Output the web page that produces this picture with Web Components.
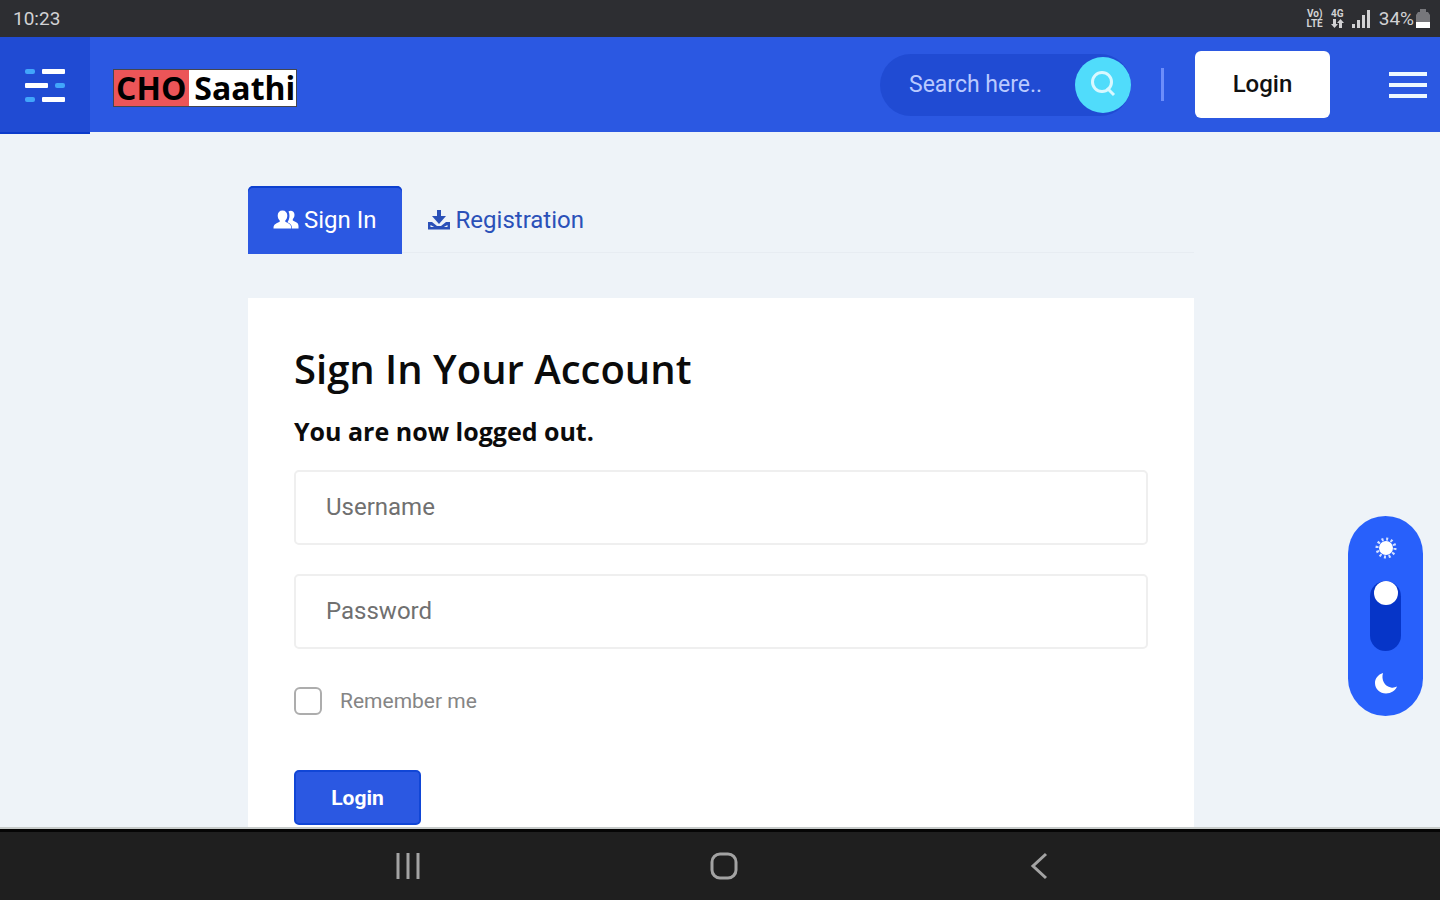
<!DOCTYPE html>
<html lang="en">
<head>
<meta charset="utf-8">
<meta name="viewport" content="width=device-width, initial-scale=1">
<title>CHO Saathi - Sign In</title>
<style>
  html, body {
    height: 100%;
    margin: 0;
  }
  body {
    font-family: Roboto, "Liberation Sans", sans-serif;
    --primary: #2b58e2;
    --primary-dark: #204bd3;
    --page: #eef3f8;
  }
</style>
</head>
<body>
<app-screen>
  <status-bar slot="top" time="10:23" battery="34%"></status-bar>
  <site-header slot="top"></site-header>
  <tab-bar>
    <tab-link href="#signin" active>
      <svg slot="icon" width="26" height="20" viewBox="0 0 26 20" fill="currentColor">
        <path d="M15.500 1.500c2-1.700 6-.6 6 3.200 0 2-.7 3.400-1.700 4.400v1.400c2.500 1.300 5.700 2 5.700 5.500v2.500h-6.500c0-4-2-5-4.500-6.300 2-2.700 2.700-7.500 1-10.700z"/>
        <path d="M9.500.5c3 0 4.800 2 4.800 5 0 2.200-.8 3.900-2 5v1.300c2.700 1.400 6 2.200 6 6.200v.5H.5V18c0-4 3.500-4.800 6.200-6.200v-1.300c-1.200-1.100-2-2.800-2-5 0-3 1.800-5 4.800-5z"/>
      </svg>
      Sign In
    </tab-link>
    <tab-link href="#registration">
      <svg slot="icon" width="24" height="20" viewBox="0 0 24 20" fill="currentColor">
        <path d="M10 0h4v6h5l-7 8-7-8h5z"/>
        <path d="M1 12h4l5 4h4l5-4h4v7.500H1zm2.500 3v2h17v-2L15 18H9z"/>
      </svg>
      Registration
    </tab-link>
  </tab-bar>
  <signin-card>
    <span slot="title">Sign In Your Account</span>
    <span slot="message">You are now logged out.</span>
    <text-field label="Username" type="text"></text-field>
    <text-field label="Password" type="password"></text-field>
    <check-field>Remember me</check-field>
    <submit-button>Login</submit-button>
  </signin-card>
  <theme-switch slot="float"></theme-switch>
  <nav-buttons slot="bottom"></nav-buttons>
</app-screen>

<script>
(function(w, doc) {
  'use strict';

  // every element here gets an open root with its own template
  function define(name, html, setup) {
    const template = doc.createElement('template');
    template.innerHTML = html;

    w.customElements.define(name, class extends HTMLElement {
      constructor() {
        super();
        this.attachShadow({ mode: 'open' });
        this.shadowRoot.appendChild(template.content.cloneNode(true));
      }

      connectedCallback() {
        if (setup) setup(this, this.shadowRoot);
      }
    });
  }

  define('app-screen', `
    <style>
      :host{
        display:flex;
        flex-direction:column;
        height:100vh;
        background:var(--page);
      }
      main{
        flex:1;
        min-height:0;
        overflow:hidden;
        padding:54px 24px 0 26px;
      }
      .content{
        max-width:946px;
        margin:0 auto;
      }
    </style>
    <slot name="top"></slot>
    <main><div class="content"><slot></slot></div></main>
    <slot name="float"></slot>
    <slot name="bottom"></slot>
  `);

  define('status-bar', `
    <style>
      :host{
        display:flex;
        align-items:center;
        justify-content:space-between;
        height:37px;
        padding:0 10px 0 13px;
        box-sizing:border-box;
        background:#2d2e32;
        color:#d2d2d4;
        font-size:19px;
      }
      .right{
        display:flex;
        align-items:center;
        gap:8px;
      }
      .badge{
        display:flex;
        flex-direction:column;
        align-items:center;
        font-size:10px;
        line-height:10px;
        font-weight:700;
      }
      .level{
        display:flex;
        align-items:center;
        gap:2px;
      }
      svg{
        display:block;
      }
    </style>
    <span class="time"></span>
    <div class="right">
      <div class="badge"><span>Vo)</span><span>LTE</span></div>
      <div class="badge">
        <span>4G</span>
        <svg width="13" height="9" viewBox="0 0 13 9" fill="currentColor">
          <path d="M2 0h3v5h2L3.500 9 0 5h2zM8 9h3V4h2L9.500 0 6 4h2z"/>
        </svg>
      </div>
      <svg width="19" height="19" viewBox="0 0 19 19" fill="currentColor">
        <path d="M0 15h3v4H0zM5 11h3v8H5zM10 6h3v13h-3zM15 1h3v18h-3z"/>
      </svg>
      <div class="level">
        <span class="battery"></span>
        <svg width="14" height="20" viewBox="0 0 14 20">
          <path d="M4 0h6v3h2l2 3v8H0V6l2-3h2z" fill="#77777b"/>
          <path d="M0 13h14v6H0z" fill="#fff"/>
        </svg>
      </div>
    </div>
  `, (el, root) => {
    root.querySelector('.time').textContent = el.getAttribute('time');
    root.querySelector('.battery').textContent = el.getAttribute('battery');
  });

  define('site-header', `
    <style>
      :host{
        display:block;
        background:var(--primary);
      }
      header{
        display:flex;
        align-items:center;
        height:95px;
        padding-right:13px;
      }
      button{
        border:none;
        padding:0;
        background:none;
        cursor:pointer;
        font:inherit;
      }
      .category{
        display:flex;
        align-items:center;
        justify-content:center;
        align-self:flex-start;
        flex:none;
        width:90px;
        height:97px;
        background:var(--primary-dark);
        border-bottom:2px solid #0b3bcb;
        box-sizing:border-box;
      }
      .login{
        width:135px;
        height:67px;
        margin:0 59px 0 31px;
        padding-bottom:2px;
        border-radius:6px;
        background:#fff;
        color:#111;
        font-size:24px;
        font-weight:500;
      }
      .divider{
        width:3px;
        height:33px;
        margin-left:30px;
        background:#6c8dfa;
      }
      site-logo{
        margin:6px auto 0 23px;
      }
      svg{
        display:block;
      }
    </style>
    <header>
      <button class="category" aria-label="Categories">
        <svg width="40" height="36" viewBox="0 0 40 36">
          <g fill="#fff">
            <rect x="17" y="2" width="23" height="5" rx="1"/>
            <rect x="0" y="16" width="23" height="5" rx="1"/>
            <rect x="17" y="30" width="23" height="5" rx="1"/>
          </g>
          <g fill="#41a5fb">
            <rect x="0" y="2" width="10" height="5" rx="2"/>
            <rect x="30" y="16" width="10" height="5" rx="2"/>
            <rect x="0" y="30" width="10" height="5" rx="2"/>
          </g>
        </svg>
      </button>
      <site-logo></site-logo>
      <search-box></search-box>
      <div class="divider"></div>
      <button class="login">Login</button>
      <button aria-label="Menu">
        <svg width="38" height="28" viewBox="0 0 38 28" fill="#edf7ff">
          <path d="M0 1h38v4H0zM0 12h38v4H0zM0 23h38v4H0z"/>
        </svg>
      </button>
    </header>
  `);

  define('site-logo', `
    <style>
      :host{
        display:block;
      }
      a{
        display:flex;
        border:1px solid #44464f;
        background:#fff;
        color:#000;
        text-decoration:none;
        font:700 32px/36px "Open Sans", sans-serif;
      }
      .cho{
        padding:0 3px 0 2px;
        background:#ec5558;
      }
      .name{
        padding:0 1px 0 5px;
      }
    </style>
    <a href="#"><span class="cho">CHO</span><span class="name">Saathi</span></a>
  `);

  define('search-box', `
    <style>
      :host{
        display:block;
      }
      form{
        display:flex;
        align-items:center;
        width:251px;
        height:62px;
        padding-left:29px;
        box-sizing:border-box;
        border-radius:31px;
        background:var(--primary-dark);
      }
      input{
        flex:1;
        min-width:0;
        padding:0;
        border:none;
        outline:none;
        background:none;
        color:#fff;
        font:23px Roboto, sans-serif;
      }
      input::placeholder{
        color:#b9c9ff;
        opacity:1;
      }
      button{
        display:flex;
        align-items:center;
        justify-content:center;
        width:56px;
        height:56px;
        padding:0;
        border:none;
        border-radius:50%;
        background:#50dcfb;
        cursor:pointer;
      }
    </style>
    <form>
      <input type="search" placeholder="Search here.." aria-label="Search">
      <button type="button" aria-label="Search">
        <svg width="26" height="28" viewBox="0 0 26 28" fill="none" stroke="#d8f8ff" stroke-width="3">
          <circle cx="12" cy="11" r="9.500"/>
          <path d="M17 17l7 7"/>
        </svg>
      </button>
    </form>
  `);

  define('tab-bar', `
    <style>
      :host{
        display:block;
        margin-bottom:44px;
      }
      nav{
        display:flex;
        background:linear-gradient(#e7ecf2, #e7ecf2) 0 66px / 100% 1px no-repeat;
      }
    </style>
    <nav><slot></slot></nav>
  `);

  define('tab-link', `
    <style>
      :host{
        display:block;
      }
      a{
        display:flex;
        align-items:center;
        gap:5px;
        height:68px;
        padding:0 25px;
        color:#2a50b8;
        font-size:24px;
        text-decoration:none;
      }
      :host([active]) a{
        color:#fff;
        background:var(--primary);
        border-radius:5px 5px 0 0;
        box-shadow:inset 0 2px #0d40cf;
      }
    </style>
    <a><slot name="icon"></slot><span><slot></slot></span></a>
  `, (el, root) => {
    root.querySelector('a').setAttribute('href', el.getAttribute('href'));
  });

  define('signin-card', `
    <style>
      :host{
        display:block;
        padding:46px 46px 60px;
        background:#fff;
        color:#0b0b0b;
      }
      h1, h2{
        margin:0;
        font-family:"Open Sans", "Noto Sans", sans-serif;
      }
      h1{
        font-size:40px;
        line-height:50px;
        font-weight:600;
      }
      h2{
        margin:21px 0 23px;
        font-size:25px;
        line-height:32px;
        font-weight:700;
      }
      form{
        display:flex;
        flex-direction:column;
        align-items:flex-start;
      }
    </style>
    <h1><slot name="title"></slot></h1>
    <h2><slot name="message"></slot></h2>
    <form><slot></slot></form>
  `);

  define('text-field', `
    <style>
      :host{
        display:block;
        width:100%;
        margin-bottom:29px;
      }
      input{
        display:block;
        width:100%;
        height:75px;
        padding:0 30px 2px;
        box-sizing:border-box;
        border:2px solid #efefef;
        border-radius:5px;
        background:#fff;
        color:#222;
        font:24px Roboto, sans-serif;
      }
      input::placeholder{
        color:#707070;
        opacity:1;
      }
    </style>
    <input>
  `, (el, root) => {
    const input = root.querySelector('input');
    input.type = el.getAttribute('type');
    input.placeholder = el.getAttribute('label');
    input.setAttribute('aria-label', el.getAttribute('label'));
  });

  define('check-field', `
    <style>
      :host{
        display:block;
        margin:9px 0 55px;
      }
      label{
        display:flex;
        align-items:center;
        gap:18px;
        color:#858585;
        font-size:21px;
        line-height:28px;
      }
      input{
        appearance:none;
        width:28px;
        height:28px;
        margin:0;
        border:2px solid #adadad;
        border-radius:6px;
        background:#fff;
      }
      input:checked{
        background:var(--primary);
      }
    </style>
    <label><input type="checkbox"><slot></slot></label>
  `);

  define('submit-button', `
    <style>
      :host{
        display:block;
      }
      button{
        width:127px;
        height:55px;
        border:2px solid #1146d6;
        border-radius:5px;
        background:var(--primary);
        color:#fff;
        font:700 21px Roboto, sans-serif;
        cursor:pointer;
      }
    </style>
    <button type="button"><slot></slot></button>
  `);

  // floats over the page, sun = light, moon = dark
  define('theme-switch', `
    <style>
      :host{
        position:fixed;
        right:17px;
        bottom:184px;
      }
      label{
        display:flex;
        flex-direction:column;
        align-items:center;
        justify-content:space-between;
        width:75px;
        height:200px;
        padding:21px 0;
        box-sizing:border-box;
        border-radius:38px;
        background:#2860fb;
      }
      input{
        appearance:none;
        display:flex;
        flex-direction:column;
        align-items:center;
        width:31px;
        height:70px;
        margin:0;
        border-radius:16px;
        background:#0635c8;
      }
      input::before{
        content:"";
        width:24px;
        height:24px;
        border-radius:50%;
        background:#fff;
      }
      input:checked{
        justify-content:flex-end;
      }
      svg{
        display:block;
      }
    </style>
    <label>
      <svg width="22" height="22" viewBox="0 0 22 22">
        <circle cx="11" cy="11" r="7" fill="#fff"/>
        <circle cx="11" cy="11" r="9" fill="none" stroke="#d6e2ff" stroke-width="3" stroke-dasharray="2 2.700"/>
      </svg>
      <input type="checkbox" aria-label="Dark mode">
      <svg width="22" height="22" viewBox="0 0 22 22" fill="#fff">
        <path d="M8 0C3 1.500 0 5.500 0 10c0 6 5 10.500 11 10.500 5 0 9.500-3 11-7-2 1-4 1.500-6 1C9.500 13.500 6 6.500 8 0z"/>
      </svg>
    </label>
  `);

  define('nav-buttons', `
    <style>
      :host{
        display:block;
        background:#1f1f1f;
        border-top:3px solid #050505;
        box-shadow:0 -2px #c7cbca;
      }
      nav{
        display:flex;
        justify-content:center;
        height:68px;
        padding-left:8px;
      }
      button{
        display:flex;
        align-items:center;
        justify-content:center;
        width:316px;
        padding:0;
        border:none;
        background:none;
      }
      svg{
        fill:none;
        stroke:#a3a3a3;
        stroke-width:3;
      }
    </style>
    <nav>
      <button aria-label="Recent apps">
        <svg width="28" height="28" viewBox="0 0 28 28"><path d="M4 1v26M14 1v26M24 1v26"/></svg>
      </button>
      <button aria-label="Home">
        <svg width="28" height="28" viewBox="0 0 28 28"><rect x="2" y="2" width="24" height="24" rx="8"/></svg>
      </button>
      <button aria-label="Back">
        <svg width="28" height="28" viewBox="0 0 28 28"><path d="M20 2L7 14l13 12"/></svg>
      </button>
    </nav>
  `);

})(window, document);
</script>
</body>
</html>
